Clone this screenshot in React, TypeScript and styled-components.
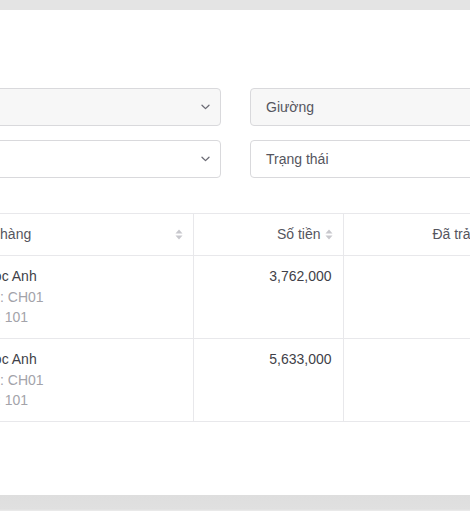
import React from 'react';
import styled, { createGlobalStyle } from 'styled-components';

const GlobalStyle = createGlobalStyle`
  html, body {
    margin: 0;
    padding: 0;
    height: 100%;
    overflow: hidden;
    background: #e4e4e4;
    font-family: "Liberation Sans", Arial, sans-serif;
  }
  #root {
    height: 100%;
  }
`;

const Page = styled.div`
  height: 100%;
  padding-top: 10px;
  box-sizing: border-box;
  background: linear-gradient(to bottom, #e4e4e4 0, #e4e4e4 495px, #dedede 495px, #e0e0e0 509px, #ececec 511px);
`;

const Panel = styled.div`
  height: 485px;
  background: #ffffff;
  overflow: hidden;
  padding-top: 78px;
  box-sizing: border-box;
`;

// wider than the window; the window only shows the middle of the modal
const Inner = styled.div`
  width: 871px;
  margin-left: -200px;
`;

const FilterGrid = styled.div`
  display: grid;
  grid-template-columns: 421px 421px;
  column-gap: 29px;
  row-gap: 14px;
`;

const Field = styled.div<{ $disabled?: boolean }>`
  height: 38px;
  box-sizing: border-box;
  border: 1px solid #d9d9dc;
  border-radius: 4px;
  background: ${(p) => (p.$disabled ? '#f7f7f7' : '#ffffff')};
  display: flex;
  align-items: center;
  padding: 0 10px 0 15px;
  font-size: 14px;
  color: #55555e;
`;

const FieldText = styled.span`
  flex: 1;
  color: #55555e;
`;

const Chevron = () => (
  <svg width="9" height="6" viewBox="0 0 9 6" fill="none">
    <path d="M1 1.2L4.5 4.6L8 1.2" stroke="#6b6b75" strokeWidth="1.3" strokeLinecap="round" strokeLinejoin="round" />
  </svg>
);

const Table = styled.table`
  margin-top: 35px;
  border-collapse: collapse;
  table-layout: fixed;
  width: 871px;
  border-top: 1px solid #e8e8eb;
`;

const Th = styled.th<{ $align?: 'left' | 'right' }>`
  height: 42px;
  box-sizing: border-box;
  padding: 0 10px 0 12px;
  font-weight: normal;
  font-size: 14px;
  line-height: 21px;
  color: #55555e;
  text-align: ${(p) => p.$align ?? 'left'};
  border-bottom: 1px solid #e8e8eb;
  border-right: 1px solid #e8e8eb;
`;

const HeadInner = styled.div<{ $align?: 'left' | 'right' }>`
  display: flex;
  align-items: center;
  justify-content: ${(p) => (p.$align === 'right' ? 'flex-end' : 'space-between')};
  gap: 4px;
  white-space: nowrap;
`;

const Td = styled.td<{ $align?: 'left' | 'right' }>`
  vertical-align: top;
  padding: 10px 11px 10.5px 12px;
  font-size: 14px;
  line-height: 20.5px;
  color: #3f3f48;
  text-align: ${(p) => p.$align ?? 'left'};
  border-bottom: 1px solid #e8e8eb;
  border-right: 1px solid #e8e8eb;
  white-space: nowrap;
`;

const Sub = styled.div`
  color: #a3a3aa;
`;

const SortIcon = () => (
  <svg width="8" height="11" viewBox="0 0 8 11" style={{ flexShrink: 0 }}>
    <path d="M4 0.5L7.5 4.5H0.5Z" fill="#c8c8cd" />
    <path d="M4 10.5L7.5 6.5H0.5Z" fill="#c8c8cd" />
  </svg>
);

type Row = {
  code: string;
  name: string;
  contract: string;
  room: string;
  amount: string;
  paid: string;
};

const rows: Row[] = [
  { code: 'HD001', name: 'Lê Ngọc Anh', contract: 'Mã HĐ: CH01', room: 'Phòng: 101', amount: '3,762,000', paid: '0' },
  { code: 'HD002', name: 'Lê Ngọc Anh', contract: 'Mã HĐ: CH01', room: 'Phòng: 101', amount: '5,633,000', paid: '0' },
];

const columns = [
  { key: 'code', title: 'Mã', width: 144, align: 'left' as const },
  { key: 'name', title: 'Khách hàng', width: 249, align: 'left' as const },
  { key: 'amount', title: 'Số tiền', width: 150, align: 'right' as const },
  { key: 'paid', title: 'Đã trả', width: 150, align: 'right' as const },
  { key: 'rest', title: 'Còn lại', width: 178, align: 'right' as const },
];

export default function App() {
  return (
    <>
      <GlobalStyle />
      <Page>
        <Panel>
          <Inner>
            <FilterGrid>
              <Field $disabled>
                <FieldText />
                <Chevron />
              </Field>
              <Field $disabled>
                <FieldText>Giường</FieldText>
              </Field>
              <Field>
                <FieldText />
                <Chevron />
              </Field>
              <Field>
                <FieldText>Trạng thái</FieldText>
              </Field>
            </FilterGrid>

            <Table>
              <colgroup>
                {columns.map((c) => (
                  <col key={c.key} style={{ width: c.width }} />
                ))}
              </colgroup>
              <thead>
                <tr>
                  {columns.map((c) => (
                    <Th key={c.key} $align={c.align}>
                      <HeadInner $align={c.align}>
                        <span>{c.title}</span>
                        <SortIcon />
                      </HeadInner>
                    </Th>
                  ))}
                </tr>
              </thead>
              <tbody>
                {rows.map((r) => (
                  <tr key={r.code}>
                    <Td>{r.code}</Td>
                    <Td>
                      <div>{r.name}</div>
                      <Sub>{r.contract}</Sub>
                      <Sub>{r.room}</Sub>
                    </Td>
                    <Td $align="right">{r.amount}</Td>
                    <Td $align="right">{r.paid}</Td>
                    <Td $align="right">{r.amount}</Td>
                  </tr>
                ))}
              </tbody>
            </Table>
          </Inner>
        </Panel>
      </Page>
    </>
  );
}
